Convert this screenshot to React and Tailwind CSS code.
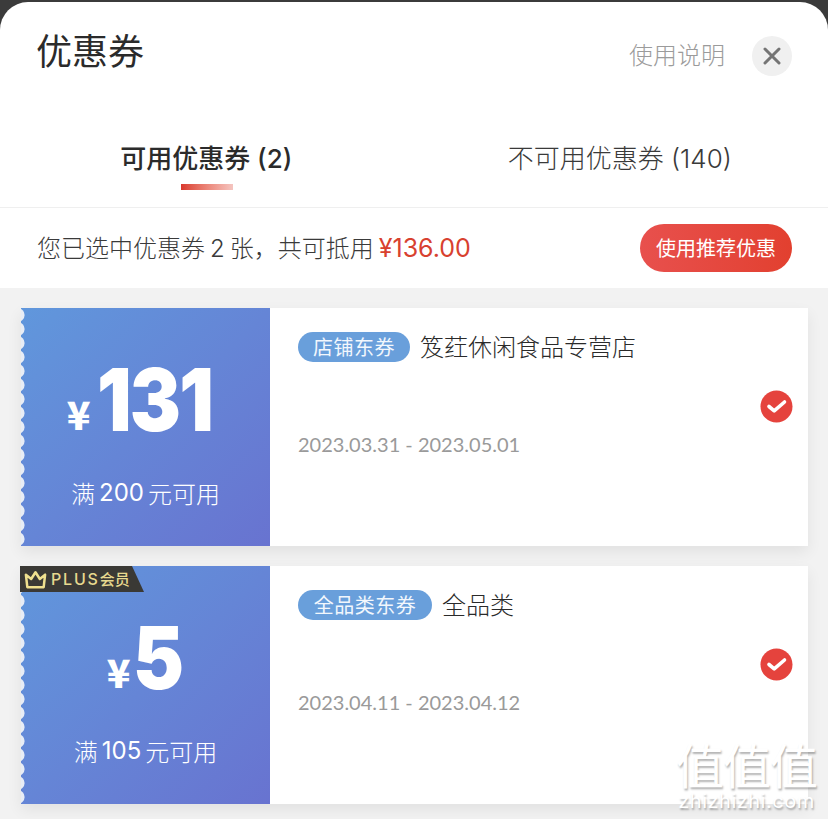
const cjk = "font-['Inter','Noto_Sans_CJK_SC',sans-serif]";

function Scallops() {
  const dots = Array.from({ length: 17 }, (_, i) => i);
  return (
    <svg className="absolute left-0 top-0 h-full w-[5px]" viewBox="0 0 5 238" preserveAspectRatio="none">
      {dots.map((i) => (
        <circle key={i} cx="-3" cy={7 + i * 14} r="6.6" fill="#e8edf6" />
      ))}
    </svg>
  );
}

function Check() {
  return (
    <svg width="33" height="33" viewBox="0 0 33 33">
      <circle cx="16.5" cy="16.5" r="16" fill="#e5433d" />
      <path d="M9 16.5l5.2 4.3L24.5 12" fill="none" stroke="#fff" strokeWidth="3.6" strokeLinecap="round" strokeLinejoin="round" />
    </svg>
  );
}

function Coupon({ amount, cond, tag, tagWidth, name, date, plus, gapClass }) {
  return (
    <div className="relative flex h-[238px] w-[787px] bg-white shadow-[0_6px_14px_rgba(0,0,0,0.07)]">
      <div className="relative flex w-[249px] shrink-0 flex-col items-center bg-linear-to-br from-[#6097dc] to-[#6873d0] text-white">
        <Scallops />
        <div className={`flex h-[136px] items-end ${gapClass}`}>
          <span className="mb-[8px] text-[39px] leading-[46px] font-black font-['Noto_Sans_CJK_SC',sans-serif]">¥</span>
          <span className="origin-left scale-x-[0.88] font-['Inter',sans-serif] font-black text-[87px] leading-[88px] tracking-[-2px]">{amount}</span>
        </div>
        <div className="mt-[33px] flex items-center text-[24px] leading-[32px] font-light font-['Noto_Sans_CJK_SC',sans-serif]">
          <span>满</span>
          <span className="mx-[4px] font-['Inter',sans-serif] font-normal">{cond}</span>
          <span>元可用</span>
        </div>
      </div>
      <div className="flex min-w-0 flex-1 items-start pl-[28px] pr-[15px]">
        <div className="min-w-0 flex-1 pt-[24px]">
          <div className="flex h-[30px] items-center">
            <span className={`flex h-[30px] items-center justify-center rounded-full bg-[#699fdb] text-[20px] tracking-[0.5px] text-[#f2f7fd] font-['Noto_Sans_CJK_SC',sans-serif] ${tagWidth}`}>{tag}</span>
            <span className="relative top-[-1px] ml-[10px] text-[24px] font-light text-[#2a2a2a] font-['Noto_Sans_CJK_SC',sans-serif]">{name}</span>
          </div>
          <div className="mt-[67px] text-[20px] leading-[30px] text-[#9a9a9a] font-['Lato',sans-serif]">{date}</div>
        </div>
        <div className="mt-[82px]">
          <Check />
        </div>
      </div>
      {plus && (
        <div className="absolute left-[-1px] top-0 flex h-[26px] w-[124px] items-center bg-[#3a3935] pl-[3px] text-[#e8d98f] [clip-path:polygon(0_0,112px_0,100%_100%,0_100%)]">
          <svg width="25" height="21" viewBox="0 0 26 20" fill="none" stroke="#efe08f" strokeWidth="2.6" strokeLinejoin="round">
            <path d="M3 5l5.5 4.5L13 2.5l4.5 7L23 5l-1.5 13h-17z" />
          </svg>
          <span className="ml-[3px] text-[16px] font-medium tracking-[1.8px] font-['Inter',sans-serif]">PLUS</span>
          <span className="text-[15px] font-medium font-['Noto_Sans_CJK_SC',sans-serif]">会员</span>
        </div>
      )}
    </div>
  );
}

export default function App() {
  return (
    <div className={`relative h-[819px] w-[828px] overflow-hidden bg-[#3b3b3b] pt-[2px] ${cjk}`}>
      <div className="flex h-[817px] flex-col overflow-hidden rounded-t-[28px] bg-white">
        <div className="flex h-[118px] shrink-0 items-start justify-between pl-[36px] pr-[36px]">
          <h1 className="mt-[21px] text-[36px] leading-[52px] font-normal text-[#2b2b2b] font-['Noto_Sans_CJK_SC',sans-serif]">优惠券</h1>
          <div className="mt-[34px] flex items-center">
            <span className="relative top-[-2px] text-[24px] font-light text-[#9b9b9b] font-['Noto_Sans_CJK_SC',sans-serif]">使用说明</span>
            <span className="ml-[27px] flex h-[40px] w-[40px] items-center justify-center rounded-full bg-[#f0f0f0]">
              <svg width="18" height="18" viewBox="0 0 18 18" stroke="#757575" strokeWidth="3" strokeLinecap="round">
                <path d="M2 2l14 14M16 2L2 16" />
              </svg>
            </span>
          </div>
        </div>

        <div className="flex h-[88px] shrink-0 border-b border-[#efefef]">
          <div className="relative flex flex-1 justify-center pt-[19px] pr-[1px]">
            <span className="text-[26px] leading-[40px] font-medium text-[#2b2b2b]">可用优惠券 (2)</span>
            <span className="absolute left-[181px] top-[64px] h-[6px] w-[52px] bg-linear-to-r from-[#d9372d] to-[#f4c5c0]" />
          </div>
          <div className="flex flex-1 justify-center pt-[19px] pr-[2px]">
            <span className="text-[26px] leading-[40px] font-light text-[#3a3a3a]">不可用优惠券 (140)</span>
          </div>
        </div>

        <div className="flex h-[80px] shrink-0 items-center justify-between pl-[37px] pr-[36px]">
          <div className="relative top-[1px] flex items-baseline text-[24px] font-light text-[#3a3a3a]">
            <span>您已选中优惠券</span>
            <span className="mx-[5px]">2</span>
            <span>张，共可抵用</span>
            <span className="ml-[5px] text-[25px] font-normal text-[#d8412f]">¥136.00</span>
          </div>
          <button className="flex h-[48px] w-[152px] items-center justify-center rounded-full bg-linear-to-r from-[#e8504d] to-[#e2402f] text-[20px] text-white font-['Noto_Sans_CJK_SC',sans-serif]">使用推荐优惠</button>
        </div>

        <div className="flex flex-1 flex-col gap-[20px] bg-[#f2f2f2] pl-[21px] pt-[20px]">
          <Coupon amount="131" cond="200" tag="店铺东券" tagWidth="w-[112px]" name="笈荭休闲食品专营店" date="2023.03.31 - 2023.05.01" gapClass="gap-[7px] pl-[4px]" />
          <Coupon amount="5" cond="105" tag="全品类东券" tagWidth="w-[134px]" name="全品类" date="2023.04.11 - 2023.04.12" gapClass="gap-[3px] pl-[5px]" plus />
        </div>
      </div>

      <div className="pointer-events-none absolute bottom-[7px] right-[11px] flex flex-col items-center gap-[3px] text-white [text-shadow:1px_2px_2px_rgba(0,0,0,0.3)]">
        <span className="text-[48px] leading-[48px] font-['Noto_Sans_CJK_SC',sans-serif] tracking-[-1px]">值值值</span>
        <span className="text-[20px] leading-[22px] tracking-[0.5px] font-['Inter',sans-serif]">zhizhizhi.com</span>
      </div>
    </div>
  );
}
